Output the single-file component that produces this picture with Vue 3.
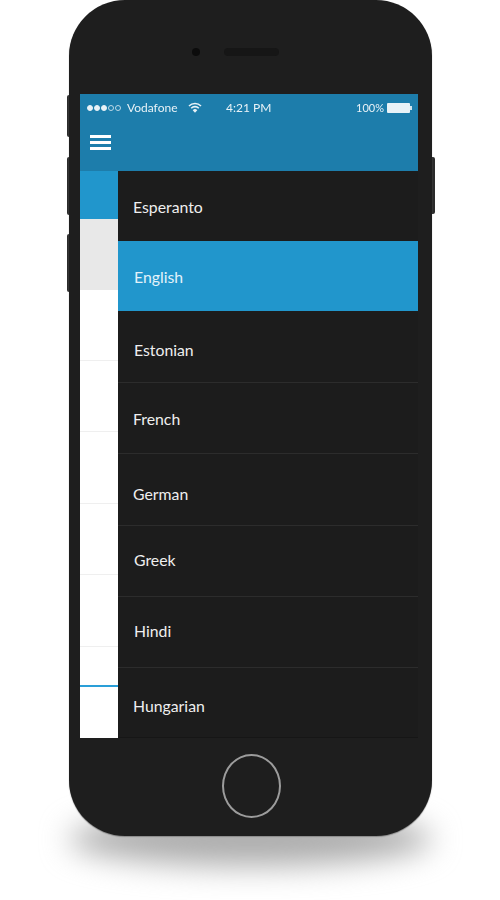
<template>
  <div class="page">
    <div class="phone">
      <div class="shadow"></div>
      <span class="side-btn left b1"></span>
      <span class="side-btn left b2"></span>
      <span class="side-btn left b3"></span>
      <span class="side-btn right b4"></span>
      <div class="body">
        <div class="top">
          <span class="camera"></span>
          <span class="speaker"></span>
        </div>
        <div class="screen">
          <div class="header">
            <div class="status">
              <div class="dots">
                <i v-for="n in 5" :key="n" :class="{ on: n < 4 }"></i>
              </div>
              <span class="carrier">Vodafone</span>
              <svg class="wifi" width="14" height="11" viewBox="0 0 14 11">
                <path d="M1 4 A8.5 8.5 0 0 1 13 4" fill="none" stroke="#fff" stroke-width="1.6" />
                <path d="M3.2 6.2 A5.4 5.4 0 0 1 10.8 6.2" fill="none" stroke="#fff" stroke-width="1.6" />
                <path d="M7 10.8 L4.7 8.2 A3.2 3.2 0 0 1 9.3 8.2 Z" fill="#fff" />
              </svg>
              <span class="time">4:21 PM</span>
              <span class="percent">100%</span>
              <span class="battery"></span>
            </div>
            <div class="burger"><i></i><i></i><i></i></div>
          </div>
          <div class="content">
            <div class="list">
              <div class="tab"></div>
              <div class="row grey"></div>
              <div class="row"></div>
              <div class="row"></div>
              <div class="row tall"></div>
              <div class="row"></div>
              <div class="row tall"></div>
              <div class="row mark"></div>
              <div class="row last"></div>
            </div>
            <ul class="menu">
              <li
                v-for="item in languages"
                :key="item.name"
                :class="{ active: item.active, line: item.line }"
                :style="{ height: item.h + 'px', paddingTop: item.top + 'px', paddingLeft: item.left + 'px' }"
              >
                {{ item.name }}
              </li>
            </ul>
          </div>
        </div>
        <div class="bottom">
          <span class="home"></span>
        </div>
      </div>
    </div>
  </div>
</template>

<script setup>
// row heights and text offsets vary a bit in the mockup
const languages = [
  { name: "Esperanto", h: 70, top: 26, left: 15 },
  { name: "English", h: 70, top: 26, left: 16, active: true },
  { name: "Estonian", h: 72, top: 29, left: 16, line: true },
  { name: "French", h: 71, top: 26, left: 15, line: true },
  { name: "German", h: 72, top: 30, left: 15, line: true },
  { name: "Greek", h: 71, top: 24, left: 16, line: true },
  { name: "Hindi", h: 71, top: 24, left: 16, line: true },
  { name: "Hungarian", h: 70, top: 28, left: 15 },
];
</script>

<style>
html,
body {
  margin: 0;
  background: #fff;
}
</style>

<style scoped>
.page {
  width: 500px;
  height: 900px;
  overflow: hidden;
  padding: 0 0 0 69px;
  box-sizing: border-box;
  font-family: "Lato", "Liberation Sans", sans-serif;
}
.phone {
  position: relative;
  width: 363px;
  height: 836px;
}
.shadow {
  position: absolute;
  left: 0;
  right: 0;
  top: 812px;
  height: 54px;
  border-radius: 50%;
  background: #adadad;
  filter: blur(15px);
}
.side-btn {
  position: absolute;
  width: 3px;
  background: #2b2b2b;
}
.side-btn.left {
  left: -2px;
  border-radius: 2px 0 0 2px;
}
.side-btn.right {
  right: -3px;
  border-radius: 0 2px 2px 0;
}
.b1 {
  top: 95px;
  height: 42px;
}
.b2 {
  top: 157px;
  height: 58px;
}
.b3 {
  top: 234px;
  height: 58px;
}
.b4 {
  top: 157px;
  height: 57px;
}
.body {
  position: relative;
  height: 100%;
  background: #1e1e1e;
  border-radius: 56px;
  box-shadow: 0 1px 1px #8a8a8a;
  display: flex;
  flex-direction: column;
  filter: blur(0.4px);
}
.top {
  height: 94px;
  display: flex;
  align-items: center;
  padding: 0 0 0 123px;
  gap: 24px;
  box-sizing: border-box;
}
.camera {
  width: 8px;
  height: 8px;
  margin-top: 9px;
  border-radius: 50%;
  background: #0c0c0c;
}
.speaker {
  width: 55px;
  height: 8px;
  margin-top: 9px;
  border-radius: 4px;
  background: #161616;
}
.screen {
  margin: 0 14px 0 11px;
  height: 644px;
  display: flex;
  flex-direction: column;
}
.header {
  height: 77px;
  background: #1d7dab;
  color: #fff;
}
.status {
  height: 27px;
  display: flex;
  align-items: center;
  padding-left: 7px;
  font-size: 12px;
  opacity: 0.9;
}
.dots {
  display: flex;
  gap: 1px;
}
.dots i {
  width: 6px;
  height: 6px;
  box-sizing: border-box;
  border-radius: 50%;
  border: 1px solid #cfe3ee;
}
.dots i.on {
  background: #fff;
  border-color: #fff;
}
.carrier {
  margin-left: 6px;
  width: 61px;
}
.wifi {
  width: 14px;
}
.time {
  margin-left: 24px;
  width: 130px;
}
.percent {
  width: 31px;
  font-size: 11px;
}
.battery {
  position: relative;
  width: 23px;
  height: 10px;
  background: #fff;
  border-radius: 1px;
}
.battery::after {
  content: "";
  position: absolute;
  right: -2px;
  top: 3px;
  width: 2px;
  height: 4px;
  background: #e6f0f5;
}
.burger {
  margin: 14px 0 0 10px;
  width: 21px;
  display: flex;
  flex-direction: column;
  gap: 3.5px;
}
.burger i {
  display: block;
  height: 2.7px;
  background: #fff;
}
.content {
  flex: 1;
  display: flex;
  min-height: 0;
}
.list {
  width: 38px;
  background: #fff;
  display: flex;
  flex-direction: column;
  border-right: 1px solid #2196cc;
  margin-right: -1px;
}
.tab {
  height: 48px;
  background: #2196cc;
}
.row {
  height: 71px;
  box-sizing: border-box;
  border-bottom: 1px solid #efefef;
}
.row.tall {
  height: 72px;
}
.row.grey {
  height: 71px;
  background: #e8e8e8;
  border-bottom: 0;
}
.row.mark {
  height: 40px;
  border-bottom: 2px solid #2a9fd8;
}
.row.last {
  height: 50px;
  border-bottom: 0;
}
.menu {
  flex: 1;
  margin: 0;
  padding: 0;
  list-style: none;
  background: #1c1c1c;
  color: #efefef;
  font-size: 15.8px;
  line-height: 20px;
  border-bottom: 1px solid #161616;
}
.menu li {
  box-sizing: border-box;
}
.menu li.line {
  border-bottom: 1px solid #2c2c2c;
}
.menu li.active {
  background: #2196cc;
  color: #e3f2fa;
}
.bottom {
  flex: 1;
  display: flex;
  justify-content: center;
  padding: 16px 0 0 1px;
}
.home {
  width: 59px;
  height: 64px;
  box-sizing: border-box;
  border: 2.5px solid #9c9c9c;
  border-radius: 50%;
}
</style>
